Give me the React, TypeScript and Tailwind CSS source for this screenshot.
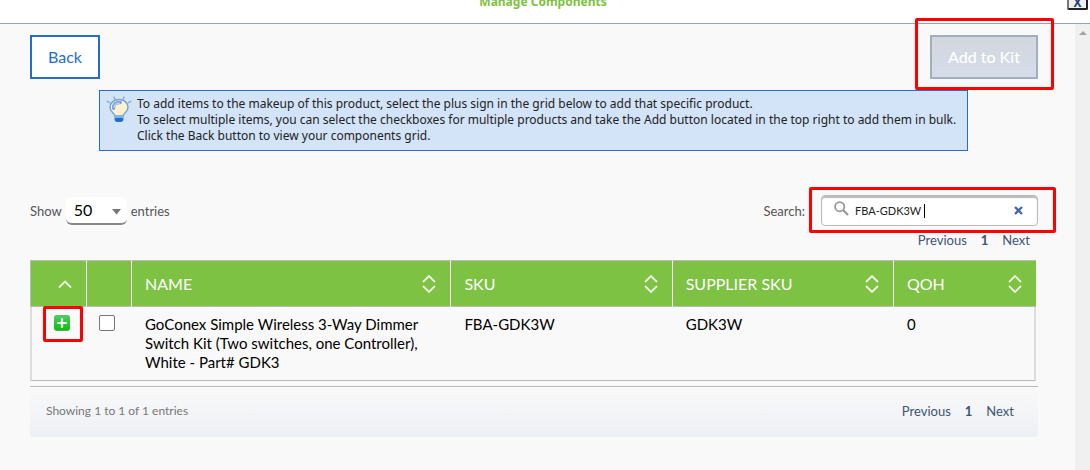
import { useState } from "react";
import type { ReactNode } from "react";

interface Component {
  name: string;
  sku: string;
  supplierSku: string;
  qoh: number;
}

const components: Component[] = [
  {
    name: "GoConex Simple Wireless 3-Way Dimmer Switch Kit (Two switches, one Controller), White - Part# GDK3",
    sku: "FBA-GDK3W",
    supplierSku: "GDK3W",
    qoh: 0,
  },
];

function BulbIcon() {
  return (
    <svg width="26" height="28" viewBox="0 0 26 28" fill="none" aria-hidden="true">
      <g stroke="#7fb0e8" strokeWidth="1.6" strokeLinecap="round">
        <path d="M8.7 3 8 1.2M17.3 3l.7-1.8M3.6 6.6 1.3 5.4M22.4 6.6l2.3-1.2" />
      </g>
      <path
        d="M13 3.6c-5.3 0-9 3.5-9 7.8 0 4.4 4.3 5.6 5 8.6h8c.7-3 5-4.2 5-8.6 0-4.3-3.7-7.8-9-7.8Z"
        fill="#fff1cf"
        stroke="#74a3d8"
        strokeWidth="1.5"
      />
      <path d="M7.6 12.2c-.4-3.9 2.2-6 6.6-5.7" stroke="#74a3d8" strokeWidth="3.4" strokeLinecap="round" />
      <path d="M8.2 11.4c.1-2.7 2-4.2 5.2-4.3" stroke="#b9d6f4" strokeWidth="1.3" strokeLinecap="round" />
      <path d="M8.4 19.6h9.2V22H8.4z" fill="#82b1ea" />
      <path d="M8.6 22h8.8v1.4c0 1.8-1.7 2.6-4.4 2.6s-4.4-.8-4.4-2.6Z" fill="#1f6fd0" />
    </svg>
  );
}

function SortIcon({ ascending = false }: { ascending?: boolean }) {
  return (
    <svg
      width="14"
      height="18"
      viewBox="0 0 14 18"
      fill="none"
      stroke="#eef7e4"
      strokeWidth="1.8"
      className="shrink-0"
      aria-hidden="true"
    >
      {ascending ? <path d="m1 12.5 6-6 6 6" /> : <path d="m1 7 6-6 6 6M1 11l6 6 6-6" />}
    </svg>
  );
}

function HeaderCell({ children }: { children: ReactNode }) {
  return (
    <th scope="col" className="border-l border-white p-0 font-normal">
      <button type="button" className="flex w-full items-center justify-between pr-3.5 pl-[13px] text-base leading-5">
        {children}
        <SortIcon />
      </button>
    </th>
  );
}

function Pagination({ className }: { className: string }) {
  return (
    <nav aria-label="Pagination" className={`flex text-[13px] leading-4 text-[#3b5573] ${className}`}>
      <button type="button">Previous</button>
      <button type="button" className="font-bold">
        1
      </button>
      <button type="button">Next</button>
    </nav>
  );
}

/** Red outline drawn over a control to call it out. */
function Callout({ className }: { className: string }) {
  return <span aria-hidden="true" className={`pointer-events-none absolute rounded-xs border-3 border-[#ff0000] ${className}`} />;
}

export default function App() {
  const [search, setSearch] = useState("FBA-GDK3W");

  return (
    <div className="flex min-h-screen flex-col bg-[#f9f9f9] font-['Lato','Liberation_Sans',sans-serif] text-black">
      <header className="relative flex h-6 items-start justify-center border-b border-[#9aa3b0] bg-white pr-1">
        <h1 className="-mt-2 font-['Noto_Sans',sans-serif] text-xs leading-5 font-bold text-[#7dc242]">
          Manage Components
        </h1>
        <button
          type="button"
          aria-label="Close"
          className="absolute -top-2 right-0.5 flex h-[18px] w-[21px] items-center justify-center rounded-xs border-2 border-[#222] border-l-[#777] bg-[#efefef] pt-1 font-['Noto_Sans',sans-serif] text-xs leading-3 font-bold text-[#1d3f73]"
        >
          X
        </button>
      </header>

      <div className="flex grow">
        <main className="min-w-0 grow pt-[11px] pr-[37px] pl-[30px]">
          <div className="flex items-start justify-between">
            <button type="button" className="h-11 border-2 border-[#226fc9] bg-white px-4 text-base text-[#226fc9]">
              Back
            </button>
            <div className="relative">
              <button
                type="button"
                disabled
                className="h-11 border-2 border-[#a0aec0] bg-linear-to-b from-[#d2d6df] to-[#d6dde9] px-4 text-base font-medium text-white"
              >
                Add to Kit
              </button>
              <Callout className="-top-[17px] -right-4 -bottom-[11px] -left-[15px]" />
            </div>
          </div>

          <div className="mr-[70px] ml-[69px] mt-[11px] flex items-start gap-[5px] border border-[#226fc9] bg-[#d3e3f8] pt-[5px] pb-1.5 pl-1.5 font-['Noto_Sans',sans-serif] text-xs leading-4 text-[#222]">
            <div className="shrink-0">
              <BulbIcon />
            </div>
            <p>
              To add items to the makeup of this product, select the plus sign in the grid below to add that specific product.
              <br />
              To select multiple items, you can select the checkboxes for multiple products and take the Add button located in the top right to add them in bulk.
              <br />
              Click the Back button to view your components grid.
            </p>
          </div>

          <div className="mt-11 flex items-start justify-between text-[13px] leading-4 text-[#555]">
            <label className="flex items-center gap-1 pt-0.5">
              Show
              <span className="relative">
                <select
                  defaultValue="50"
                  className="h-7 w-[61px] appearance-none rounded-md border-b-2 border-[#888] bg-white pl-2 text-base leading-6 text-black"
                >
                  <option>10</option>
                  <option>25</option>
                  <option>50</option>
                  <option>100</option>
                </select>
                <svg className="pointer-events-none absolute top-3 right-1.5" width="9" height="6" viewBox="0 0 9 6" aria-hidden="true">
                  <path d="M0 0h9L4.5 5.5Z" fill="#777" />
                </svg>
              </span>
              entries
            </label>

            <div className="flex items-center gap-4">
              <label htmlFor="component-search">Search:</label>
              <div className="relative flex h-[31px] w-[217px] items-center rounded-sm border border-[#bbb] bg-white pr-3.5 pl-3 shadow-[inset_0_2px_1px_#bbb]">
                <svg width="15" height="15" viewBox="0 0 15 15" fill="none" stroke="#999" className="mb-1 shrink-0" aria-hidden="true">
                  <circle cx="5.7" cy="5.7" r="4.6" strokeWidth="1.8" />
                  <path d="m9.2 9.2 4.8 4.8" strokeWidth="2.3" />
                </svg>
                <input
                  id="component-search"
                  type="text"
                  value={search}
                  onChange={(e) => setSearch(e.target.value)}
                  className="min-w-0 grow pl-1.5 text-[11px] text-[#222] outline-none"
                />
                <span aria-hidden="true" className="absolute top-2 left-[102px] h-3.5 w-px bg-black" />
                <button type="button" aria-label="Clear search" onClick={() => setSearch("")}>
                  <svg width="9" height="9" viewBox="0 0 9 9" stroke="#4469a5" strokeWidth="2.3" aria-hidden="true">
                    <path d="m1 1 7 7M8 1 1 8" />
                  </svg>
                </button>
                <Callout className="-top-[9px] -right-[19px] -bottom-2 -left-[13px]" />
              </div>
            </div>
          </div>

          <Pagination className="mt-1.5 mb-3 justify-end gap-3.5 pr-2" />

          <div className="pr-0.5">
            <table className="w-full table-fixed border-separate border-spacing-0 text-left">
              <colgroup>
                <col className="w-14" />
                <col className="w-[45px]" />
                <col />
                <col className="w-[22%]" />
                <col className="w-[22%]" />
                <col className="w-[143px]" />
              </colgroup>
              <thead>
                <tr className="h-[47px] bg-[#7dc242] text-white [&>th]:border-y [&>th]:border-y-[#bbb]">
                  <th scope="col" className="border-l border-l-[#bbb] p-0">
                    <button type="button" aria-label="Sort by action" className="flex w-full justify-end pr-3.5">
                      <SortIcon ascending />
                    </button>
                  </th>
                  <th scope="col" aria-label="Select" className="border-l border-l-white" />
                  <HeaderCell>NAME</HeaderCell>
                  <HeaderCell>SKU</HeaderCell>
                  <HeaderCell>SUPPLIER SKU</HeaderCell>
                  <HeaderCell>QOH</HeaderCell>
                </tr>
              </thead>
              <tbody>
                {components.map((item) => (
                  <tr
                    key={item.sku}
                    className="align-top text-[15px] leading-[19px] [&>td]:border-b [&>td]:border-b-[#bbb] [&>td]:pt-2 [&>td]:pb-2"
                  >
                    <td className="border-l-2 border-l-[#ddd] pl-[22px]">
                      <div className="relative size-4">
                        <button type="button" aria-label={`Add ${item.sku}`} className="block">
                          <svg width="16" height="16" viewBox="0 0 16 16" aria-hidden="true">
                            <defs>
                              <linearGradient id="plus-fill" x2="0" y2="1">
                                <stop stopColor="#55c96a" />
                                <stop offset="1" stopColor="#0bbf0b" />
                              </linearGradient>
                            </defs>
                            <rect width="16" height="15.5" rx="2.5" fill="url(#plus-fill)" />
                            <path d="M1.5 15.2h13" stroke="#3f9b47" />
                            <path d="M8 3.2v9.6M3.2 8h9.6" stroke="#e9f7e9" strokeWidth="2.2" />
                          </svg>
                        </button>
                        <Callout className="-top-[9px] -right-[13px] -bottom-[11px] -left-[11px]" />
                      </div>
                    </td>
                    <td className="pl-[13px]">
                      <input
                        type="checkbox"
                        aria-label={`Select ${item.sku}`}
                        className="block size-4 appearance-none rounded-xs border border-[#767676] bg-white checked:bg-[#226fc9]"
                      />
                    </td>
                    <td className="pr-4 pl-3.5">{item.name}</td>
                    <td className="pl-3.5">{item.sku}</td>
                    <td className="pl-3.5">{item.supplierSku}</td>
                    <td className="border-r-2 border-r-[#ddd] pl-3.5">{item.qoh}</td>
                  </tr>
                ))}
              </tbody>
            </table>
          </div>

          <footer className="mt-[5px] flex h-[51px] items-center justify-between rounded-b-xs border-t border-[#bbb] bg-linear-to-b from-[#f9f9f9] to-[#eef0f5] pr-6 pb-0.5 pl-4 text-xs leading-4 text-[#777]">
            <p>Showing 1 to 1 of 1 entries</p>
            <Pagination className="gap-3.5" />
          </footer>
        </main>

        <div aria-hidden="true" className="flex w-[15px] shrink-0 justify-center bg-[#f0f0f0] pt-[7px]">
          <svg width="8" height="4" viewBox="0 0 8 4">
            <path d="M4 0 8 4H0Z" fill="#a3a3a3" />
          </svg>
        </div>
      </div>
    </div>
  );
}
